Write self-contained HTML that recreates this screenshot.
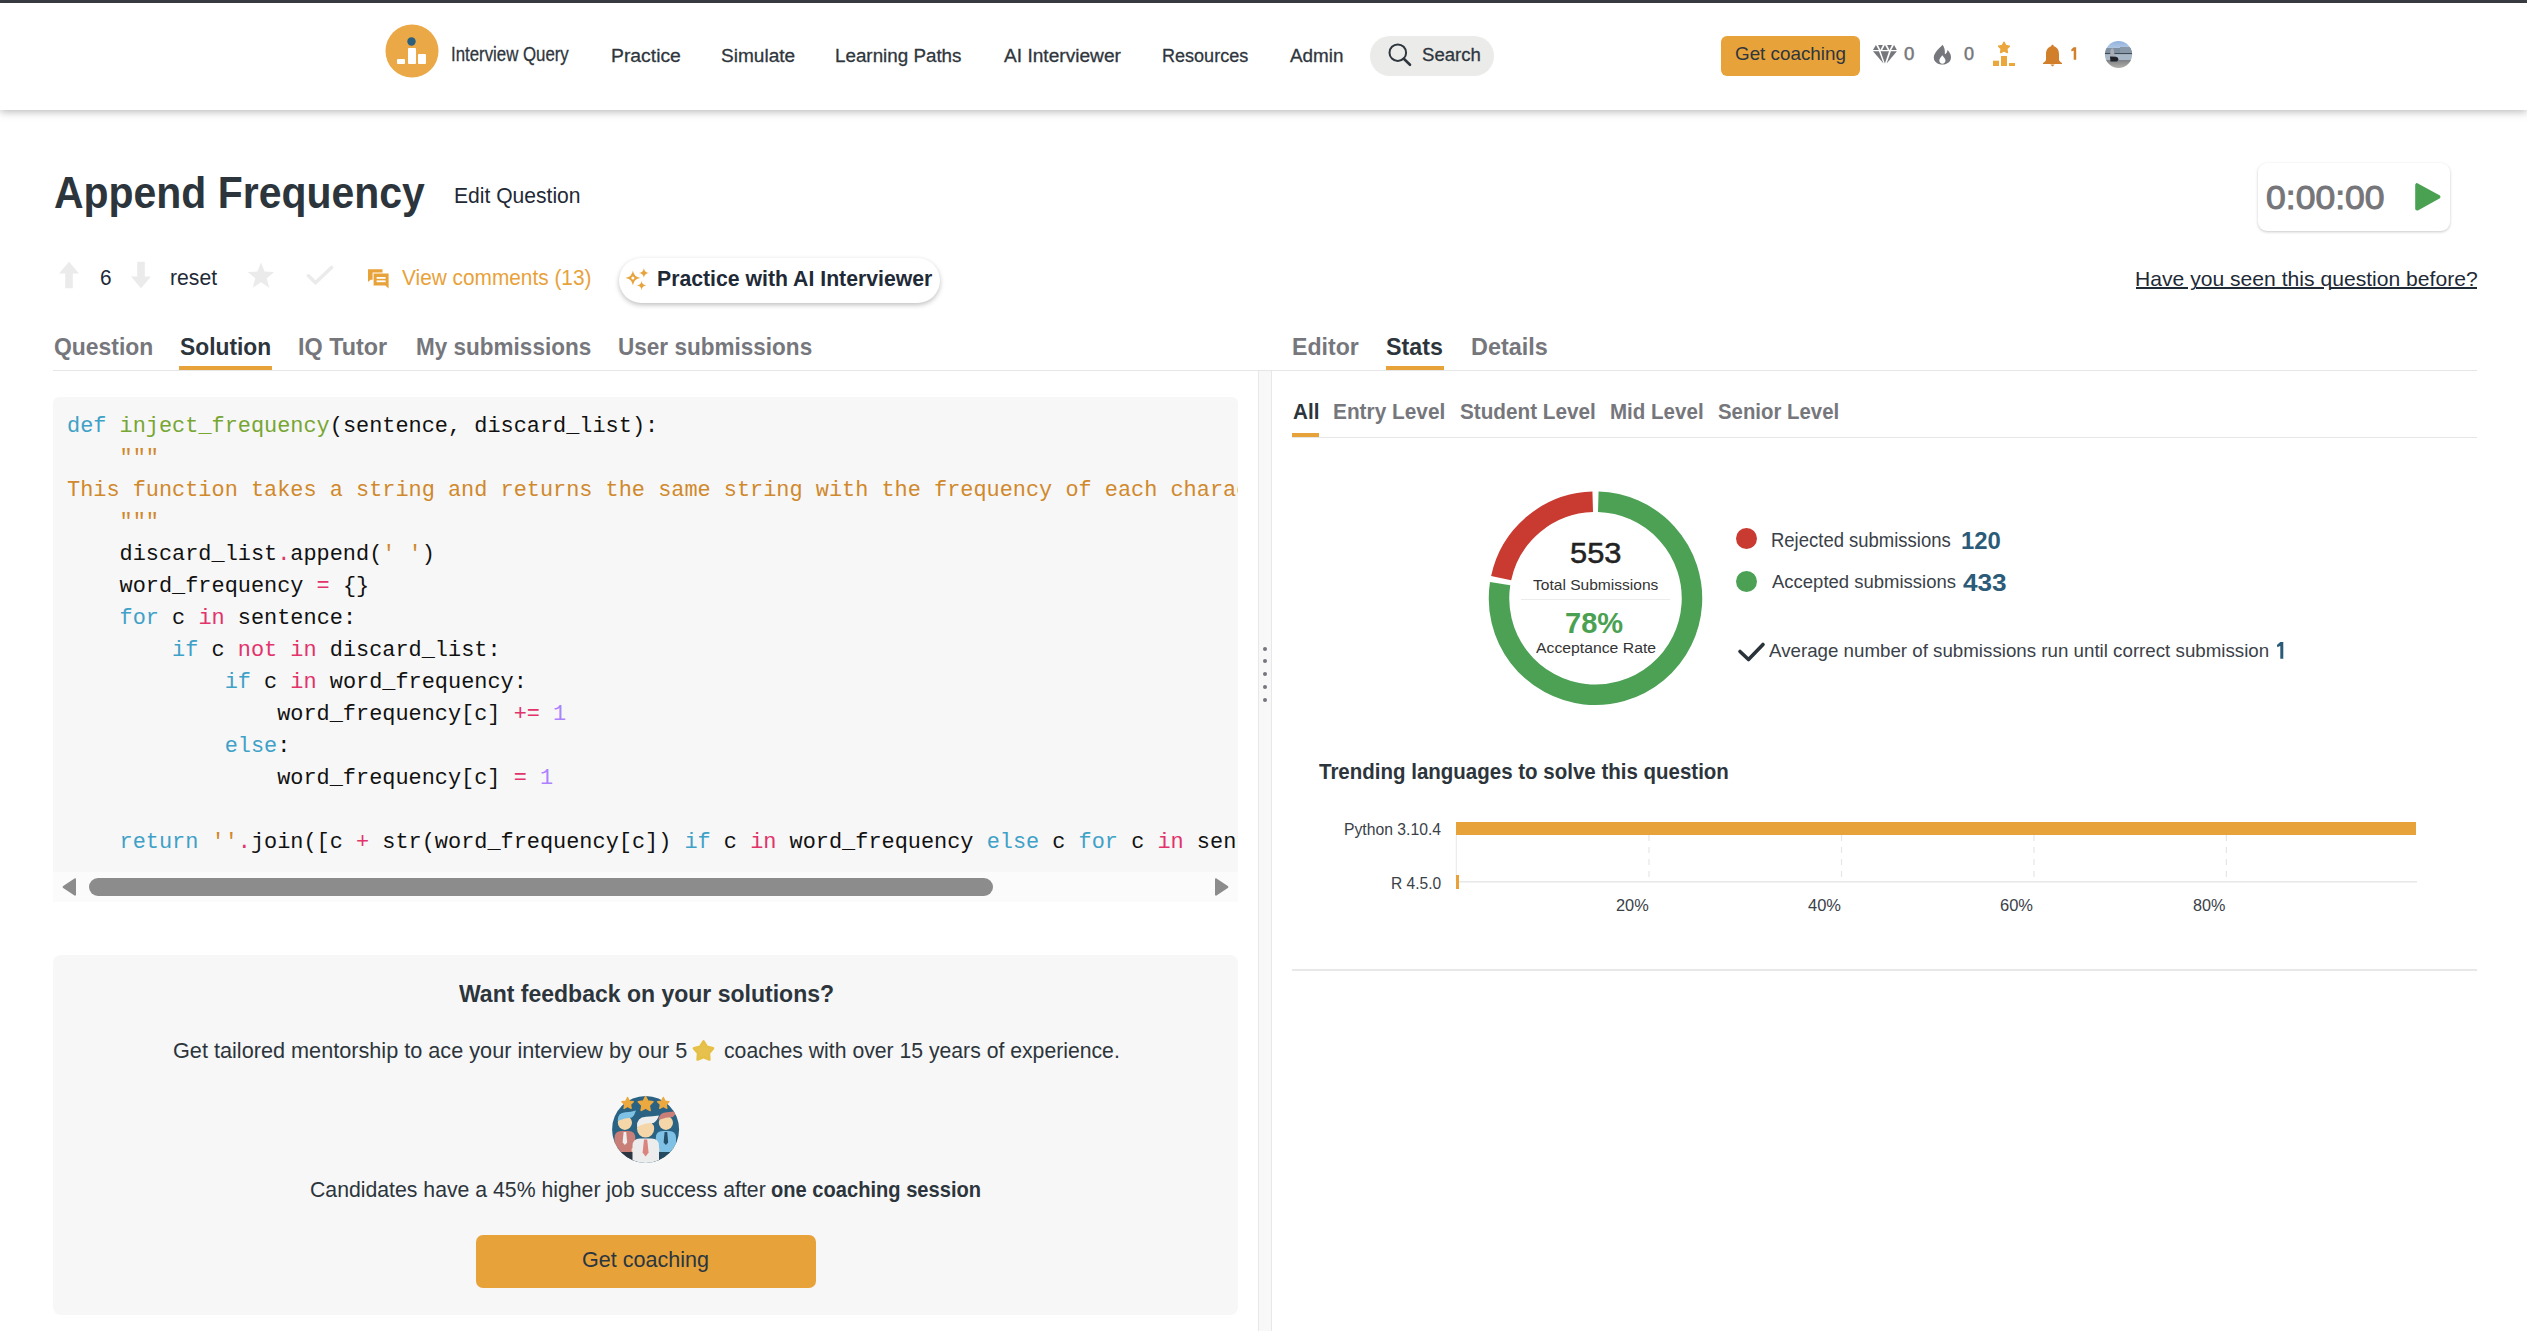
<!DOCTYPE html>
<html><head><meta charset="utf-8"><style>
html,body{margin:0;padding:0;background:#fff;width:2527px;height:1331px;overflow:hidden;position:relative}
.t{position:absolute;white-space:nowrap;line-height:1;font-family:"Liberation Sans",sans-serif}
.r{position:absolute}
pre.code{margin:0;font-family:"Liberation Mono",monospace;color:#111;white-space:pre}
</style></head><body>
<div class="r" style="left:0px;top:0px;width:2527px;height:3px;background:#3b3e44;"></div>
<div class="r" style="left:0px;top:3px;width:2527px;height:107px;background:#fff;box-shadow:0 2px 8px rgba(0,0,0,0.27);"></div>
<svg class="r" style="left:385px;top:24px;" width="54" height="54" viewBox="0 0 54 54"><circle cx="27" cy="27" r="26.5" fill="#eba846"/><circle cx="26.5" cy="17.5" r="4.2" fill="#2a5f80"/><rect x="12" y="35" width="8" height="5" rx="1" fill="#fff"/><rect x="23" y="24" width="8" height="16" rx="1" fill="#fff"/><rect x="33" y="30" width="8" height="10" rx="1" fill="#fff"/></svg>
<div class="t" style="left:451.20px;top:43.70px;font-size:20.35px;color:#2f363d;transform:scaleX(0.8267);transform-origin:0 0;-webkit-text-stroke:0.3px #2f363d;">Interview Query</div>
<div class="t" style="left:611.16px;top:45.89px;font-size:19.19px;color:#2f363d;transform:scaleX(1.0077);transform-origin:0 0;-webkit-text-stroke:0.3px #2f363d;">Practice</div>
<div class="t" style="left:720.80px;top:45.89px;font-size:19.19px;color:#2f363d;transform:scaleX(0.9931);transform-origin:0 0;-webkit-text-stroke:0.3px #2f363d;">Simulate</div>
<div class="t" style="left:835.48px;top:45.99px;font-size:19.19px;color:#2f363d;transform:scaleX(0.9799);transform-origin:0 0;-webkit-text-stroke:0.3px #2f363d;">Learning Paths</div>
<div class="t" style="left:1003.72px;top:45.99px;font-size:19.19px;color:#2f363d;transform:scaleX(0.9966);transform-origin:0 0;-webkit-text-stroke:0.3px #2f363d;">AI Interviewer</div>
<div class="t" style="left:1161.80px;top:45.99px;font-size:19.19px;color:#2f363d;transform:scaleX(0.9399);transform-origin:0 0;-webkit-text-stroke:0.3px #2f363d;">Resources</div>
<div class="t" style="left:1290.00px;top:45.99px;font-size:19.19px;color:#2f363d;transform:scaleX(0.9825);transform-origin:0 0;-webkit-text-stroke:0.3px #2f363d;">Admin</div>
<div class="r" style="left:1370px;top:36px;width:124px;height:40px;background:#ebebea;border-radius:20px;"></div>
<svg class="r" style="left:1386px;top:42px;" width="28" height="26" viewBox="0 0 28 26"><circle cx="11.8" cy="10.7" r="8.3" fill="none" stroke="#2f363d" stroke-width="2"/><line x1="17.8" y1="16.7" x2="24" y2="22.8" stroke="#2f363d" stroke-width="2.6" stroke-linecap="round"/></svg>
<div class="t" style="left:1422.20px;top:45.94px;font-size:18.90px;color:#2f363d;transform:scaleX(0.9838);transform-origin:0 0;-webkit-text-stroke:0.3px #2f363d;">Search</div>
<div class="r" style="left:1721px;top:36px;width:139px;height:40px;background:#e8a23a;border-radius:6px;"></div>
<div class="t" style="left:1735.20px;top:45.23px;font-size:18.31px;color:#2f363d;transform:scaleX(1.0282);transform-origin:0 0;">Get coaching</div>
<svg class="r" style="left:1873px;top:45px;" width="25" height="20" viewBox="0 0 25 20"><g fill="#75777c"><polygon points="-0.1,5.05 5.8,5.05 2.9,0"/><polygon points="5.1,0 9.9,0 7.4,5.05"/><polygon points="9.2,5.05 14.8,5.05 11.9,0"/><polygon points="14.1,0 18.9,0 16.5,5.05"/><polygon points="18.2,5.05 23.9,5.05 21.1,0"/><polygon points="-0.1,6.25 5.9,6.25 10.5,18.6"/><polygon points="7.6,6.25 16.0,6.25 11.9,18.4"/><polygon points="17.9,6.25 23.9,6.25 13.6,18.6"/></g></svg>
<div class="t" style="left:1904.32px;top:44.76px;font-size:18.75px;color:#76777c;transform:scaleX(0.9917);transform-origin:0 0;-webkit-text-stroke:0.5px #75777c;">0</div>
<svg class="r" style="left:1933px;top:44px;" width="19" height="21" viewBox="0 0 19 21"><path d="M9.5 0.8 C6.5 4.5 0.8 8.5 0.8 13.5 C0.8 17.8 4.5 20.5 9.5 20.5 C14.5 20.5 18 17.5 18 13.2 C18 9.8 16 7.5 14.5 6 C14.2 8.5 13 9.8 11.8 10.3 C12.2 6.5 11.5 3.2 9.5 0.8 Z" fill="#75777c"/><path d="M9.3 11.2 C7.8 13.2 6.3 14.6 6.3 16.6 C6.3 18.5 7.7 19.8 9.4 19.8 C11.1 19.8 12.5 18.5 12.5 16.6 C12.5 14.6 10.8 13.2 9.3 11.2 Z" fill="#fff"/></svg>
<div class="t" style="left:1964.00px;top:44.76px;font-size:18.75px;color:#76777c;transform:scaleX(0.9610);transform-origin:0 0;-webkit-text-stroke:0.5px #75777c;">0</div>
<svg class="r" style="left:1992px;top:41px;" width="24" height="26" viewBox="0 0 24 26"><g fill="#eba63c"><polygon points="12.00,1.30 13.71,4.54 17.33,5.17 14.77,7.80 15.29,11.43 12.00,9.81 8.71,11.43 9.23,7.80 6.67,5.17 10.29,4.54" stroke="#eba63c" stroke-width="1.6" stroke-linejoin="round"/><rect x="1" y="19.7" width="6" height="5.3"/><rect x="9" y="15" width="6" height="10"/><rect x="17" y="22" width="6" height="3"/></g></svg>
<svg class="r" style="left:2042px;top:44px;" width="21" height="23" viewBox="0 0 21 23"><path d="M10.5 0.8 C11.3 0.8 11.8 1.5 11.8 2.3 C15.5 3.3 17 6.5 17 10.5 L17 15.5 C17 17 18.5 18.3 20 19 L20 20 L1 20 L1 19 C2.5 18.3 4 17 4 15.5 L4 10.5 C4 6.5 5.5 3.3 9.2 2.3 C9.2 1.5 9.7 0.8 10.5 0.8 Z" fill="#d17f2b"/><path d="M8.3 20.6 L12.7 20.6 L10.5 22.5 Z" fill="#d17f2b"/></svg>
<svg class="r" style="left:2068px;top:45px;" width="12" height="17" viewBox="0 0 12 17"><path d="M5.7 2.3 L8.2 2.3 L8.2 14.7 L5.7 14.7 Z M5.7 2.3 L8.2 2.3 L8.2 4.2 L3.6 6.4 L3.2 4.6 Z" fill="#d17f2b"/></svg>
<svg class="r" style="left:2104px;top:40px;" width="29" height="29" viewBox="0 0 29 29"><defs><clipPath id="av"><circle cx="14.5" cy="14.5" r="13.6"/></clipPath><linearGradient id="sky" x1="0" y1="0" x2="0" y2="1"><stop offset="0" stop-color="#8db0de"/><stop offset="1" stop-color="#c8d6e6"/></linearGradient><linearGradient id="pier" x1="0" y1="0" x2="0" y2="1"><stop offset="0" stop-color="#7e8084"/><stop offset="1" stop-color="#b8b6b0"/></linearGradient></defs><g clip-path="url(#av)"><rect width="29" height="14" fill="url(#sky)"/><rect y="8" width="29" height="6" fill="#7f8fa0"/><rect x="16" y="7" width="12" height="6" fill="#8898a8"/><rect y="13" width="29" height="1.5" fill="#3e4a56"/><rect y="14.5" width="29" height="5.5" fill="#a9b8c6"/><rect y="20" width="29" height="9" fill="url(#pier)"/><path d="M6 18 L6.5 10 Q8 7 9.5 9 L11 17 Z" fill="#a7acb5"/><path d="M6 16.5 L12 16.8 Q14.5 17.5 14.5 19.5 L13 21.5 L6.5 21.5 Z" fill="#1e2128"/></g></svg>
<div class="t" style="left:53.52px;top:170.91px;font-size:43.75px;color:#2d353c;font-weight:700;transform:scaleX(0.9357);transform-origin:0 0;">Append Frequency</div>
<div class="t" style="left:453.80px;top:185.72px;font-size:21.51px;color:#1f2a37;transform:scaleX(0.9805);transform-origin:0 0;">Edit Question</div>
<div class="r" style="left:2258px;top:163px;width:192px;height:68px;background:#fff;border-radius:9px;box-shadow:0 1px 3px rgba(0,0,0,0.22);"></div>
<div class="t" style="left:2265.84px;top:180.54px;font-size:33.72px;color:#75757a;transform:scaleX(1.0538);transform-origin:0 0;-webkit-text-stroke:1px #75757a;">0:00:00</div>
<svg class="r" style="left:2414px;top:182px;" width="27" height="30" viewBox="0 0 27 30"><polygon points="3,3 3,26.8 24.6,14.9" fill="#4aa152" stroke="#4aa152" stroke-width="3.6" stroke-linejoin="round"/></svg>
<svg class="r" style="left:58px;top:261px;" width="22" height="28" viewBox="0 0 22 28"><polygon points="11,0.8 21,12.6 14.8,12.6 14.8,27.2 7.2,27.2 7.2,12.6 1,12.6" fill="#ebebeb"/></svg>
<div class="t" style="left:99.52px;top:267.47px;font-size:21.80px;color:#1f2a37;transform:scaleX(0.9520);transform-origin:0 0;">6</div>
<svg class="r" style="left:130px;top:261px;" width="22" height="28" viewBox="0 0 22 28"><polygon points="11,27.2 21,15.4 14.8,15.4 14.8,0.8 7.2,0.8 7.2,15.4 1,15.4" fill="#ebebeb"/></svg>
<div class="t" style="left:170.20px;top:267.47px;font-size:21.80px;color:#1f2a37;transform:scaleX(0.9716);transform-origin:0 0;">reset</div>
<svg class="r" style="left:247px;top:262px;" width="28" height="27" viewBox="0 0 28 27"><polygon points="14,0.5 17.6,9.6 27.2,10 19.7,16.2 22.3,25.8 14,20.3 5.7,25.8 8.3,16.2 0.8,10 10.4,9.6" fill="#ebebeb"/></svg>
<svg class="r" style="left:306px;top:265px;" width="28" height="21" viewBox="0 0 28 21"><polyline points="2.5,10.8 9.5,17.8 25.5,2.5" fill="none" stroke="#ebebeb" stroke-width="3.6" stroke-linecap="round" stroke-linejoin="round"/></svg>
<svg class="r" style="left:367px;top:268px;" width="23" height="21" viewBox="0 0 23 21"><path d="M1 1.2 L15.5 1.2 L15.5 4.6 L5.6 4.6 L5.6 11.8 L3.6 11.8 L1 14 Z" fill="#e8a23a"/><path d="M6.6 5.6 L21.6 5.6 L21.6 20.5 L18.4 17.6 L6.6 17.6 Z" fill="#e8a23a"/><rect x="9.6" y="9" width="9" height="1.8" fill="#fff"/><rect x="9.6" y="12.4" width="9" height="1.8" fill="#fff"/></svg>
<div class="t" style="left:402.04px;top:267.52px;font-size:21.51px;color:#e8a23a;transform:scaleX(0.9687);transform-origin:0 0;">View comments (13)</div>
<div class="r" style="left:619px;top:258px;width:321px;height:45px;background:#fff;border-radius:23px;box-shadow:0 2px 5px rgba(0,0,0,0.25);"></div>
<svg class="r" style="left:620px;top:265px;" width="30" height="28" viewBox="0 0 30 28"><path d="M12.9 5.5 Q13.8 12.0 20.3 12.9 Q13.8 13.8 12.9 20.3 Q12.0 13.8 5.5 12.9 Q12.0 12.0 12.9 5.5 Z M23.9 3.0 Q24.299999999999997 7.5 28.799999999999997 7.9 Q24.299999999999997 8.3 23.9 12.8 Q23.5 8.3 19.0 7.9 Q23.5 7.5 23.9 3.0 Z M21.6 15.8 Q22.0 20.1 26.3 20.5 Q22.0 20.9 21.6 25.2 Q21.200000000000003 20.9 16.900000000000002 20.5 Q21.200000000000003 20.1 21.6 15.8 Z" fill="#e8a23a"/><circle cx="12.9" cy="12.9" r="1.5" fill="#fff"/></svg>
<div class="t" style="left:657.16px;top:268.40px;font-size:22.24px;color:#1f2a37;font-weight:700;transform:scaleX(0.9551);transform-origin:0 0;">Practice with AI Interviewer</div>
<div class="t" style="left:2134.80px;top:268.91px;font-size:20.93px;color:#1f2a37;transform:scaleX(1.0090);transform-origin:0 0;">Have you seen this question before?</div>
<div class="r" style="left:2135.5px;top:287.2px;width:52.5px;height:1.8px;background:#1f2a37;"></div>
<div class="r" style="left:2195.5px;top:287.2px;width:128.5px;height:1.8px;background:#1f2a37;"></div>
<div class="r" style="left:2330px;top:287.2px;width:146.5px;height:1.8px;background:#1f2a37;"></div>
<div class="r" style="left:53px;top:370px;width:2424px;height:1px;background:#e6e6e6;"></div>
<div class="t" style="left:53.56px;top:335.00px;font-size:24.71px;color:#76777c;font-weight:700;transform:scaleX(0.9278);transform-origin:0 0;">Question</div>
<div class="t" style="left:179.80px;top:335.00px;font-size:24.71px;color:#2d353c;font-weight:700;transform:scaleX(0.9231);transform-origin:0 0;">Solution</div>
<div class="r" style="left:179px;top:366px;width:93px;height:4px;background:#e8a23a;"></div>
<div class="t" style="left:298.48px;top:335.00px;font-size:24.71px;color:#76777c;font-weight:700;transform:scaleX(0.9454);transform-origin:0 0;">IQ Tutor</div>
<div class="t" style="left:415.80px;top:335.00px;font-size:24.71px;color:#76777c;font-weight:700;transform:scaleX(0.9116);transform-origin:0 0;">My submissions</div>
<div class="t" style="left:618.20px;top:335.00px;font-size:24.71px;color:#76777c;font-weight:700;transform:scaleX(0.9125);transform-origin:0 0;">User submissions</div>
<div class="t" style="left:1291.92px;top:335.00px;font-size:24.71px;color:#76777c;font-weight:700;transform:scaleX(0.9360);transform-origin:0 0;">Editor</div>
<div class="t" style="left:1386.20px;top:335.00px;font-size:24.71px;color:#2d353c;font-weight:700;transform:scaleX(0.9415);transform-origin:0 0;">Stats</div>
<div class="r" style="left:1386px;top:366px;width:58px;height:4px;background:#e8a23a;"></div>
<div class="t" style="left:1471.20px;top:335.00px;font-size:24.71px;color:#76777c;font-weight:700;transform:scaleX(0.9481);transform-origin:0 0;">Details</div>
<div class="r" style="left:1258px;top:371px;width:14px;height:960px;background:#f8f8f8;border-left:1px solid #e8e8e8;border-right:1px solid #e8e8e8;box-sizing:border-box;"></div>
<div class="r" style="left:1263px;top:647px;width:4px;height:4px;background:#75777c;border-radius:2px;"></div>
<div class="r" style="left:1263px;top:659px;width:4px;height:4px;background:#75777c;border-radius:2px;"></div>
<div class="r" style="left:1263px;top:672px;width:4px;height:4px;background:#75777c;border-radius:2px;"></div>
<div class="r" style="left:1263px;top:685px;width:4px;height:4px;background:#75777c;border-radius:2px;"></div>
<div class="r" style="left:1263px;top:698px;width:4px;height:4px;background:#75777c;border-radius:2px;"></div>
<div class="r" style="left:53px;top:397px;width:1185px;height:475px;background:#f7f7f7;border-radius:6px 6px 0 0;"></div>
<div class="r" style="left:53px;top:872px;width:1185px;height:30px;background:#fbfbfb;"></div>
<svg class="r" style="left:61px;top:877px;" width="16" height="20" viewBox="0 0 16 20"><path d="M13.5 1.5 C14.3 1 15 1.5 15 2.5 L15 17.5 C15 18.5 14.3 19 13.5 18.5 L2.2 11 C1.4 10.5 1.4 9.5 2.2 9 Z" fill="#8c8c8c"/></svg>
<div class="r" style="left:89px;top:878px;width:904px;height:18px;background:#8c8c8c;border-radius:9px;"></div>
<svg class="r" style="left:1214px;top:877px;" width="16" height="20" viewBox="0 0 16 20"><path d="M2.5 1.5 C1.7 1 1 1.5 1 2.5 L1 17.5 C1 18.5 1.7 19 2.5 18.5 L13.8 11 C14.6 10.5 14.6 9.5 13.8 9 Z" fill="#8c8c8c"/></svg>
<div class="r" style="left:53px;top:397px;width:1185px;height:475px;overflow:hidden"><pre class="code" style="position:absolute;left:14px;top:14px;font-size:21.9px;line-height:32px;"><span style="color:#3fa1c7">def</span> <span style="color:#77a632">inject_frequency</span>(sentence, discard_list):
<span style="color:#d0892c">    &quot;&quot;&quot;</span>
<span style="color:#d0892c">This function takes a string and returns the same string with the frequency of each character appended after it.</span>
<span style="color:#d0892c">    &quot;&quot;&quot;</span>
    discard_list<span style="color:#e2336b">.</span>append(<span style="color:#d0892c">&#x27; &#x27;</span>)
    word_frequency <span style="color:#e2336b">=</span> {}
    <span style="color:#3fa1c7">for</span> c <span style="color:#e2336b">in</span> sentence:
        <span style="color:#3fa1c7">if</span> c <span style="color:#e2336b">not</span> <span style="color:#e2336b">in</span> discard_list:
            <span style="color:#3fa1c7">if</span> c <span style="color:#e2336b">in</span> word_frequency:
                word_frequency[c] <span style="color:#e2336b">+=</span> <span style="color:#ae81ff">1</span>
            <span style="color:#3fa1c7">else</span>:
                word_frequency[c] <span style="color:#e2336b">=</span> <span style="color:#ae81ff">1</span>

    <span style="color:#3fa1c7">return</span> <span style="color:#d0892c">&#x27;&#x27;</span><span style="color:#e2336b">.</span>join([c <span style="color:#e2336b">+</span> str(word_frequency[c]) <span style="color:#3fa1c7">if</span> c <span style="color:#e2336b">in</span> word_frequency <span style="color:#3fa1c7">else</span> c <span style="color:#3fa1c7">for</span> c <span style="color:#e2336b">in</span> sentence])</pre></div>
<div class="r" style="left:53px;top:955px;width:1185px;height:360px;background:#f7f7f7;border-radius:8px;"></div>
<div class="t" style="left:458.68px;top:983.46px;font-size:23.69px;color:#2d353c;font-weight:700;transform:scaleX(0.9715);transform-origin:0 0;">Want feedback on your solutions?</div>
<div class="t" style="left:173.48px;top:1040.12px;font-size:22.09px;color:#2d353c;transform:scaleX(0.9814);transform-origin:0 0;">Get tailored mentorship to ace your interview by our 5</div>
<svg class="r" style="left:692px;top:1039px;" width="23" height="23" viewBox="0 0 23 23"><defs><linearGradient id="sg" x1="0" y1="0" x2="0" y2="1"><stop offset="0" stop-color="#fde272"/><stop offset="1" stop-color="#f0b422"/></linearGradient></defs><polygon points="11.50,2.40 14.85,7.79 21.01,9.31 16.92,14.16 17.38,20.49 11.50,18.10 5.62,20.49 6.08,14.16 1.99,9.31 8.15,7.79" fill="#e6c14e" stroke="#e6bf45" stroke-width="2.6" stroke-linejoin="round"/></svg>
<div class="t" style="left:723.56px;top:1040.12px;font-size:22.09px;color:#2d353c;transform:scaleX(0.9598);transform-origin:0 0;">coaches with over 15 years of experience.</div>
<svg class="r" style="left:606px;top:1090px;" width="80" height="80" viewBox="0 0 80 80"><defs><clipPath id="cc"><circle cx="39.6" cy="39.4" r="33.5"/></clipPath></defs>
<circle cx="39.6" cy="39.4" r="33.5" fill="#2a6283"/>
<g clip-path="url(#cc)">
<rect x="5" y="58" width="26" height="25" fill="#2d3640"/>
<rect x="48" y="58" width="26" height="25" fill="#244a60"/>
<path d="M8.5 62 L8.5 48 Q8.5 41 15.5 41 L22.5 41 Q29.3 41 29.3 48 L29.3 62 Z" fill="#c97f78"/>
<polygon points="17.6,42 20.2,42 21.2,52.5 18.9,55 16.6,52.5" fill="#eeeeee"/>
<circle cx="10.2" cy="60" r="2.2" fill="#f5d6a8"/><circle cx="27.6" cy="60" r="2.2" fill="#f5d6a8"/>
<circle cx="18.9" cy="32.8" r="7.1" fill="#f5d6a8"/>
<path d="M11.6 31 Q11.5 22.5 19.5 22.2 Q25 22 30 20.5 Q28.5 25.5 26 27.5 Q19 27.5 11.6 31 Z" fill="#7fc1e4"/>
<path d="M49.8 62 L49.8 48 Q49.8 41 56.8 41 L63 41 Q70 41 70 48 L70 62 Z" fill="#7fc1e4"/>
<polygon points="58.6,42 61.2,42 62.2,52.5 59.9,55 57.6,52.5" fill="#24506a"/>
<circle cx="51.4" cy="60" r="2.2" fill="#f5d6a8"/><circle cx="68.4" cy="60" r="2.2" fill="#f5d6a8"/>
<circle cx="59.9" cy="32.8" r="7.1" fill="#f5d6a8"/>
<path d="M52.6 30 Q53 22.5 61 22.2 Q66 22 70.5 21 Q69 25.5 67 27 Q60 27 52.6 30 Z" fill="#c97f78"/>
<path d="M26.5 82 L26.5 56 Q26.5 48.5 34 48.5 L45.5 48.5 Q53 48.5 53 56 L53 82 Z" fill="#ececec"/>
<polygon points="38,49.5 41.2,49.5 42.6,62.5 39.6,66.5 36.6,62.5" fill="#d9847c"/>
<circle cx="28.2" cy="73.5" r="2.4" fill="#f5d6a8"/><circle cx="51" cy="73.5" r="2.4" fill="#f5d6a8"/>
<circle cx="39.6" cy="38.8" r="8.6" fill="#f5d6a8"/>
<path d="M31 37 Q30.5 27 40 26.8 Q47 26.5 53 25.5 Q51 31 47.5 33 Q39 32.5 31 37 Z" fill="#eeeeee"/>
</g>
<g fill="#eca93f"><polygon points="21.60,7.50 23.36,11.07 27.31,11.65 24.45,14.43 25.13,18.35 21.60,16.50 18.07,18.35 18.75,14.43 15.89,11.65 19.84,11.07" stroke="#eca93f" stroke-width="1.4" stroke-linejoin="round"/><polygon points="39.60,6.40 41.89,11.04 47.02,11.79 43.31,15.41 44.18,20.51 39.60,18.10 35.02,20.51 35.89,15.41 32.18,11.79 37.31,11.04" stroke="#eca93f" stroke-width="1.4" stroke-linejoin="round"/><polygon points="57.30,7.50 59.06,11.07 63.01,11.65 60.15,14.43 60.83,18.35 57.30,16.50 53.77,18.35 54.45,14.43 51.59,11.65 55.54,11.07" stroke="#eca93f" stroke-width="1.4" stroke-linejoin="round"/></g></svg>
<div class="t" style="left:310.16px;top:1179.37px;font-size:21.80px;color:#2d353c;transform:scaleX(0.9744);transform-origin:0 0;">Candidates have a 45% higher job success after</div>
<div class="t" style="left:771.36px;top:1179.37px;font-size:21.80px;color:#2d353c;font-weight:700;transform:scaleX(0.9223);transform-origin:0 0;">one coaching session</div>
<div class="r" style="left:476px;top:1235px;width:340px;height:53px;background:#e8a23a;border-radius:7px;"></div>
<div class="t" style="left:582.20px;top:1248.89px;font-size:21.66px;color:#2a3640;transform:scaleX(0.9943);transform-origin:0 0;">Get coaching</div>
<div class="r" style="left:1292px;top:437px;width:1185px;height:1px;background:#e6e6e6;"></div>
<div class="t" style="left:1292.64px;top:401.40px;font-size:22.24px;color:#2d353c;font-weight:700;transform:scaleX(0.9293);transform-origin:0 0;">All</div>
<div class="r" style="left:1292px;top:433px;width:27px;height:4px;background:#e8a23a;"></div>
<div class="t" style="left:1332.88px;top:401.40px;font-size:22.24px;color:#76777c;font-weight:700;transform:scaleX(0.9366);transform-origin:0 0;">Entry Level</div>
<div class="t" style="left:1460.00px;top:401.40px;font-size:22.24px;color:#76777c;font-weight:700;transform:scaleX(0.9312);transform-origin:0 0;">Student Level</div>
<div class="t" style="left:1610.24px;top:401.40px;font-size:22.24px;color:#76777c;font-weight:700;transform:scaleX(0.9239);transform-origin:0 0;">Mid Level</div>
<div class="t" style="left:1718.04px;top:401.40px;font-size:22.24px;color:#76777c;font-weight:700;transform:scaleX(0.9161);transform-origin:0 0;">Senior Level</div>
<svg class="r" style="left:1460px;top:460px;" width="280" height="280" viewBox="0 0 280 280"><path d="M132.72 41.84 A96.5 96.5 0 0 0 41.13 118.15" fill="none" stroke="#c93a31" stroke-width="20.5"/><path d="M40.12 123.62 A96.5 96.5 0 1 0 138.28 41.84" fill="none" stroke="#4ca155" stroke-width="20.5"/></svg>
<div class="t" style="left:1570.16px;top:539.29px;font-size:29.07px;color:#222;transform:scaleX(1.0620);transform-origin:0 0;-webkit-text-stroke:0.5px #222;">553</div>
<div class="t" style="left:1533.28px;top:577.97px;font-size:14.97px;color:#333;transform:scaleX(1.0389);transform-origin:0 0;">Total Submissions</div>
<div class="r" style="left:1521px;top:599px;width:149px;height:1px;background:#ececec;"></div>
<div class="t" style="left:1565.32px;top:608.43px;font-size:30.09px;color:#4aa152;font-weight:700;transform:scaleX(0.9660);transform-origin:0 0;">78%</div>
<div class="t" style="left:1535.76px;top:639.95px;font-size:15.12px;color:#333;transform:scaleX(1.0432);transform-origin:0 0;">Acceptance Rate</div>
<div class="r" style="left:1736px;top:528px;width:21px;height:21px;background:#c93a31;border-radius:50%;"></div>
<div class="t" style="left:1771.16px;top:530.67px;font-size:19.33px;color:#3a4148;transform:scaleX(0.9561);transform-origin:0 0;">Rejected submissions</div>
<div class="t" style="left:1960.52px;top:529.44px;font-size:24.42px;color:#2b5b78;font-weight:700;transform:scaleX(0.9784);transform-origin:0 0;">120</div>
<div class="r" style="left:1736px;top:570.5px;width:21px;height:21px;background:#4ca155;border-radius:50%;"></div>
<div class="t" style="left:1771.96px;top:572.76px;font-size:18.75px;color:#3a4148;transform:scaleX(0.9863);transform-origin:0 0;">Accepted submissions</div>
<div class="t" style="left:1963.00px;top:571.24px;font-size:24.42px;color:#2b5b78;font-weight:700;transform:scaleX(1.0727);transform-origin:0 0;">433</div>
<svg class="r" style="left:1737px;top:640px;" width="30" height="23" viewBox="0 0 30 23"><polyline points="3,11.5 11.5,19.5 26,4.5" fill="none" stroke="#2a323a" stroke-width="3.6" stroke-linecap="round" stroke-linejoin="round"/></svg>
<div class="t" style="left:1768.64px;top:642.09px;font-size:18.60px;color:#3a4148;transform:scaleX(1.0069);transform-origin:0 0;">Average number of submissions run until correct submission</div>
<svg class="r" style="left:2274px;top:640px;" width="12" height="21" viewBox="0 0 12 21"><path d="M6.3 2 L9.3 2 L9.3 18.8 L6.3 18.8 Z M6.3 2 L9.3 2 L9.3 4.6 L3.4 7.2 L2.9 4.9 Z" fill="#2b5b78"/></svg>
<div class="t" style="left:1318.68px;top:761.62px;font-size:21.51px;color:#2d353c;font-weight:700;transform:scaleX(0.9531);transform-origin:0 0;">Trending languages to solve this question</div>
<div class="t" style="left:1343.80px;top:821.16px;font-size:16.28px;color:#3a4148;transform:scaleX(0.9669);transform-origin:0 0;">Python 3.10.4</div>
<div class="t" style="left:1390.56px;top:875.16px;font-size:16.28px;color:#3a4148;transform:scaleX(0.9562);transform-origin:0 0;">R 4.5.0</div>
<svg class="r" style="left:1440px;top:800px;" width="1000" height="100" viewBox="0 0 1000 100"><line x1="209" y1="835" x2="209" y2="881" stroke="#e6e6e6" stroke-width="1.2" stroke-dasharray="6 6" transform="translate(0,-800)"/><line x1="401.5" y1="835" x2="401.5" y2="881" stroke="#e6e6e6" stroke-width="1.2" stroke-dasharray="6 6" transform="translate(0,-800)"/><line x1="594" y1="835" x2="594" y2="881" stroke="#e6e6e6" stroke-width="1.2" stroke-dasharray="6 6" transform="translate(0,-800)"/><line x1="786.4000000000001" y1="835" x2="786.4000000000001" y2="881" stroke="#e6e6e6" stroke-width="1.2" stroke-dasharray="6 6" transform="translate(0,-800)"/><line x1="16.4" y1="35" x2="16.4" y2="81" stroke="#ececec" stroke-width="1.2"/><line x1="16" y1="81.8" x2="977" y2="81.8" stroke="#e8e8e8" stroke-width="1.6"/></svg>
<div class="r" style="left:1456px;top:822px;width:960px;height:13px;background:#e8a23a;"></div>
<div class="r" style="left:1456px;top:875px;width:3px;height:14px;background:#e8a23a;"></div>
<div class="t" style="left:1616.00px;top:896.85px;font-size:17.01px;color:#3a4148;transform:scaleX(0.9608);transform-origin:0 0;">20%</div>
<div class="t" style="left:1807.96px;top:896.85px;font-size:17.01px;color:#3a4148;transform:scaleX(0.9702);transform-origin:0 0;">40%</div>
<div class="t" style="left:2000.36px;top:896.85px;font-size:17.01px;color:#3a4148;transform:scaleX(0.9702);transform-origin:0 0;">60%</div>
<div class="t" style="left:2193.28px;top:896.85px;font-size:17.01px;color:#3a4148;transform:scaleX(0.9514);transform-origin:0 0;">80%</div>
<div class="r" style="left:1292px;top:969px;width:1185px;height:2px;background:#e8e8e8;"></div>
</body></html>
